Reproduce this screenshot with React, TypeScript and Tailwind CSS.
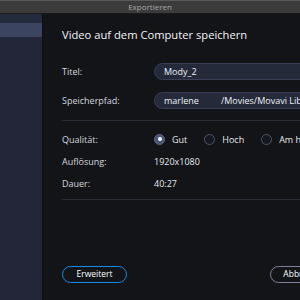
import { useState } from 'react';

type Quality = 'gut' | 'hoch' | 'max';

const qualities: { id: Quality; label: string }[] = [
  { id: 'gut', label: 'Gut' },
  { id: 'hoch', label: 'Hoch' },
  { id: 'max', label: 'Am höchsten' },
];

export default function App() {
  const [quality, setQuality] = useState<Quality>('gut');

  return (
    <div
      className="flex h-[300px] w-[300px] flex-col overflow-hidden bg-[#131418] text-white"
      style={{ fontFamily: '"Open Sans", "Liberation Sans", sans-serif' }}
    >
      {/* title bar */}
      <div className="flex h-[14px] shrink-0 items-center justify-center border-t border-[#5a5a5a] border-b border-b-[#1a1a1a] bg-[#3b3b3b] text-[8px] leading-none text-[#a8a8a8]">
        Exportieren
      </div>

      <div className="flex min-h-0 flex-1">
        {/* sidebar */}
        <aside className="flex w-[43px] shrink-0 flex-col border-r border-[#0e0f12] bg-[#222638]">
          <div className="h-[9px] bg-[#252b3f]" />
          <div className="h-[14px] bg-[#3b4461]" />
        </aside>

        {/* main */}
        <main className="flex min-w-0 flex-1 flex-col pl-[19px]">
          <h1 className="mt-[13px] whitespace-nowrap text-[11.2px] leading-[16px] text-[#f2f3f5]">
            Video auf dem Computer speichern
          </h1>

          <div className="mt-[20px] flex flex-col gap-[12px]">
            <Row label="Titel:" tall>
              <Field>Mody_2</Field>
            </Row>
            <Row label="Speicherpfad:" tall>
              <Field>
                <span>marlene</span>
                <span className="ml-[22px]">/Movies/Movavi Library</span>
              </Field>
            </Row>
          </div>

          <div className="mt-[11px] h-px bg-[#2a2d37]" />

          <div className="mt-[12px] flex flex-col gap-[10px]">
            <Row label="Qualität:">
              <div className="flex h-[12px] items-center whitespace-nowrap">
                {qualities.map((q) => (
                  <button
                    key={q.id}
                    onClick={() => setQuality(q.id)}
                    className="mr-[17px] flex h-[12px] items-center gap-[7px] text-[9px] leading-none text-[#e6e8ee]"
                  >
                    <span
                      className={`flex h-[11px] w-[11px] items-center justify-center rounded-full border ${
                        quality === q.id ? 'border-[#5c6788] bg-[#4a5576]' : 'border-[#4c5370] bg-[#16181f]'
                      }`}
                    >
                      {quality === q.id && <span className="h-[4px] w-[4px] rounded-full bg-white" />}
                    </span>
                    {q.label}
                  </button>
                ))}
              </div>
            </Row>
            <Row label="Auflösung:">
              <span className="text-[9px] leading-none text-[#e6e8ee]">1920x1080</span>
            </Row>
            <Row label="Dauer:">
              <span className="text-[9px] leading-none text-[#e6e8ee]">40:27</span>
            </Row>
          </div>

          <div className="mt-[10px] h-px bg-[#2a2d37]" />

          <div className="mt-auto mb-[17px] flex items-center justify-between whitespace-nowrap">
            <button className="flex h-[17px] w-[65px] items-center justify-center rounded-full border-[1.5px] border-[#1a8be8] text-[8.5px] text-white">
              Erweitert
            </button>
            <button className="-mr-[40px] flex h-[17px] w-[70px] items-center justify-center rounded-full border-[1.5px] border-[#7c8295] text-[8.5px] text-white">
              Abbrechen
            </button>
          </div>
        </main>
      </div>
    </div>
  );
}

function Row({ label, tall, children }: { label: string; tall?: boolean; children: React.ReactNode }) {
  return (
    <div className={`flex items-center ${tall ? 'h-[17px]' : 'h-[12px]'}`}>
      <span className="w-[92px] shrink-0 text-[9px] leading-none text-[#d4d7df]">{label}</span>
      <div className="flex min-w-0 flex-1 items-center">{children}</div>
    </div>
  );
}

function Field({ children }: { children: React.ReactNode }) {
  return (
    <div className="flex h-[17px] w-[200px] shrink-0 items-center whitespace-nowrap rounded-full border border-[#393f56] bg-[#252a3b] pl-[9px] text-[9px] text-[#eef0f4]">
      {children}
    </div>
  );
}
